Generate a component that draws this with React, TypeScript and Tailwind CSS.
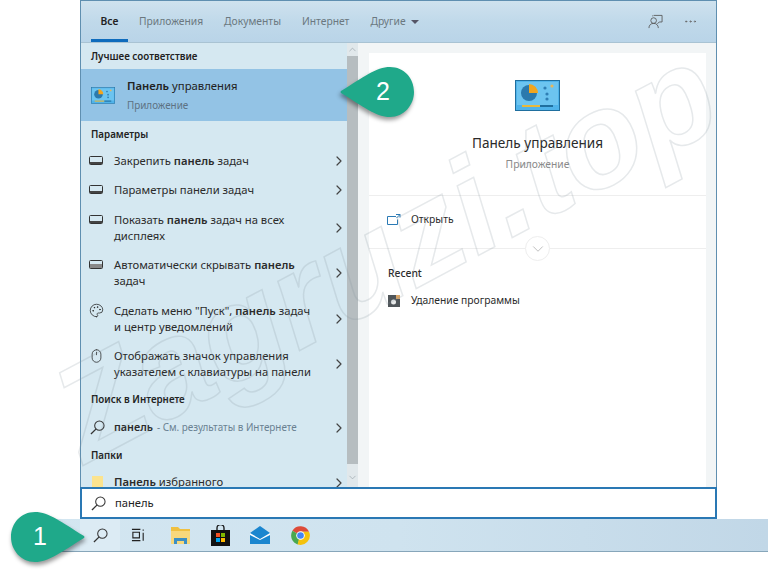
import { ChevronDown, ChevronRight, ChevronUp, MoreHorizontal, Mouse, Palette } from 'lucide-react'
import type { ReactNode } from 'react'

function ControlPanelIcon({ large }: { large?: boolean }) {
  return (
    <svg viewBox="0 0 45 31" className={large ? 'w-[45px] h-[31px]' : 'w-[24px] h-[17px]'}>
      <rect x="0.5" y="0.5" width="44" height="30" fill="#4fb3ea" stroke="#1f6f9f" />
      <rect x="2" y="2" width="41" height="23" fill="#6cc4f0" />
      <circle cx="14" cy="13" r="8" fill="#2b79ad" />
      <path d="M14 13V4a9 9 0 0 1 9 9z" fill="#f2a51e" />
      <circle cx="30" cy="8" r="1.6" fill="#2f7fb5" />
      <circle cx="37" cy="6" r="1.6" fill="#e7b65a" />
      <circle cx="32" cy="14" r="1.6" fill="#2f7fb5" />
      <circle cx="32" cy="19" r="1.6" fill="#2f7fb5" />
      <rect x="7" y="25" width="18" height="2" fill="#e8b93c" />
      <rect x="25" y="25" width="13" height="2" fill="#1f6f9f" />
    </svg>
  )
}

function TaskbarGlyph({ filled }: { filled?: boolean }) {
  return (
    <svg viewBox="0 0 14 9" className="w-[14px] h-[9px] shrink-0">
      <rect x="0.5" y="0.5" width="13" height="8" rx="1" fill="none" stroke="#333" />
      <rect x="1" y={filled ? 4 : 6} width="12" height={filled ? 4 : 2} fill={filled ? '#888' : '#444'} />
    </svg>
  )
}

function SearchGlyph({ className }: { className?: string }) {
  return (
    <svg viewBox="0 0 16 16" className={`w-[15px] h-[15px] shrink-0 ${className ?? ''}`} fill="none" stroke="#333" strokeWidth="1.1">
      <circle cx="10" cy="6" r="5" />
      <path d="M6.300 9.700 1 15" strokeWidth="1.400" />
    </svg>
  )
}

function SectionTitle({ children, className }: { children: ReactNode; className: string }) {
  return <div className={`pl-[10px] text-[9.8px] leading-[14px] font-semibold text-[#222] ${className}`}>{children}</div>
}

function SettingRow({ icon, children, className }: { icon: ReactNode; children: ReactNode; className: string }) {
  return (
    <div className={`flex items-center pl-[8px] ${className}`}>
      <div className="flex items-start">
        <div className="w-[25px] h-[16px] shrink-0 flex items-center">{icon}</div>
        <div className="w-[202px] shrink-0 text-[11.25px] leading-[16px] text-[#2b2b2b]">{children}</div>
      </div>
      <ChevronRight className="w-[16px] h-[16px] ml-auto text-[#444]" strokeWidth={1.8} />
    </div>
  )
}

function Tab({ children, active, className }: { children: ReactNode; active?: boolean; className?: string }) {
  return (
    <div className={`h-full flex items-center text-[10.3px] ${active ? 'w-[37px] justify-center font-semibold text-[#222] border-b-[3px] border-[#0f6cbd] pt-[3px]' : 'text-[#6b7880]'} ${className ?? ''}`}>
      {children}
    </div>
  )
}

function Callout({ n, flip, className, numClass }: { n: string; flip?: boolean; className: string; numClass: string }) {
  return (
    <div className={`absolute w-[74px] h-[50px] ${className}`}>
      <svg viewBox="0 0 74 50" className={`w-full h-full drop-shadow-[1px_3px_2px_rgba(0,0,0,0.4)] ${flip ? '-scale-x-100' : ''}`}>
        <path d="M24 0C38 0 50 10 73 24Q74 25 73 26C50 40 38 50 24 50C10 50 0 38 0 25C0 11 10 0 24 0Z" fill="#1fa98a" />
      </svg>
      <span className={`absolute top-0 h-full flex items-center text-[25px] text-white font-['Liberation_Sans',sans-serif] ${numClass}`}>{n}</span>
    </div>
  )
}

export default function App() {
  return (
    <div className="relative w-[768px] h-[574px] overflow-hidden bg-white font-['Noto_Sans',sans-serif]">
      {/* Search window */}
      <div className="ml-[80px] w-[637px] h-[519px] flex flex-col border-x border-t border-[#5f8fb0]">
        <div className="h-[42px] shrink-0 flex items-stretch pl-[10px] pr-[18px] bg-gradient-to-b from-[#cfe2ee] via-[#c0d9ea] to-[#b9d4e8] border-b border-[#a9c3d3]">
          <div className="flex items-stretch gap-[21px] text-nowrap">
            <Tab active>Все</Tab>
            <Tab className="-ml-[10px]">Приложения</Tab>
            <Tab>Документы</Tab>
            <Tab>Интернет</Tab>
            <div className="flex items-center gap-[5px] text-[10.3px] text-[#6b7880]">
              Другие
              <span className="w-0 h-0 border-x-[4px] border-x-transparent border-t-[4px] border-t-[#556]" />
            </div>
          </div>
          <div className="ml-auto flex items-center gap-[20px]">
            <svg viewBox="0 0 16 16" className="w-[15px] h-[15px]" fill="none" stroke="#555" strokeWidth="0.9">
              <circle cx="6" cy="7" r="3" />
              <path d="M1 15c0-3 2-5 5-5s5 2 5 5M6 1.500h9v7h-3l-2 2M5 1.500v1" />
            </svg>
            <MoreHorizontal className="w-[15px] h-[15px] text-[#666]" strokeWidth={1.3} />
          </div>
        </div>

        <div className="flex-1 min-h-0 flex">
          {/* Results list */}
          <div className="w-[266px] shrink-0 overflow-hidden bg-[#d5e8f1]">
            <SectionTitle className="pt-[7px] pb-[5px]">Лучшее соответствие</SectionTitle>
            <div className="h-[52px] flex items-center pl-[10px] bg-[#93c3e5]">
              <ControlPanelIcon />
              <div className="ml-[12px] text-[11.3px] leading-[16px] pt-[1px]">
                <div className="text-[#222]"><b className="font-semibold">Панель</b> управления</div>
                <div className="text-[9.9px] text-[#5d7283] mt-[3px]">Приложение</div>
              </div>
            </div>
            <SectionTitle className="pt-[7px] pb-[5px]">Параметры</SectionTitle>
            <SettingRow icon={<TaskbarGlyph />} className="h-[27px]"><span>Закрепить <b className="font-semibold">панель</b> задач</span></SettingRow>
            <SettingRow icon={<TaskbarGlyph />} className="h-[29px] mt-[1px]">Параметры панели задач</SettingRow>
            <SettingRow icon={<TaskbarGlyph />} className="h-[45px] mt-[1px]"><span>Показать <b className="font-semibold">панель</b> задач на всех дисплеях</span></SettingRow>
            <SettingRow icon={<TaskbarGlyph filled />} className="h-[45px]"><span>Автоматически скрывать <b className="font-semibold">панель</b> задач</span></SettingRow>
            <SettingRow icon={<Palette className="w-[15px] h-[15px] text-[#222]" strokeWidth={1.2} />} className="h-[45px] mt-[1px]"><span>Сделать меню "Пуск", <b className="font-semibold">панель</b> задач и центр уведомлений</span></SettingRow>
            <SettingRow icon={<Mouse className="w-[15px] h-[16px] text-[#222]" strokeWidth={1.2} />} className="h-[45px]">Отображать значок управления указателем с клавиатуры на панели</SettingRow>
            <SectionTitle className="pt-[7px] pb-[6px]">Поиск в Интернете</SectionTitle>
            <div className="h-[27px] flex items-center pl-[9px] mt-[1px]">
              <SearchGlyph className="mr-[9px]" />
              <span className="text-[10.8px] text-[#2b2b2b] font-semibold">панель</span>
              <span className="text-[9.9px] text-[#6a8191] ml-[4px]">- См. результаты в Интернете</span>
              <ChevronRight className="w-[16px] h-[16px] ml-auto text-[#444]" strokeWidth={1.8} />
            </div>
            <SectionTitle className="pt-[8px] pb-[6px]">Папки</SectionTitle>
            <div className="h-[27px] flex items-center pl-[11px]">
              <span className="w-[11px] h-[14px] bg-[#fbe38e] mr-[11px]" />
              <span className="text-[11.25px] text-[#2b2b2b]"><b className="font-semibold">Панель</b> избранного</span>
              <ChevronRight className="w-[16px] h-[16px] ml-auto text-[#444]" strokeWidth={1.8} />
            </div>
          </div>

          {/* Scrollbar */}
          <div className="w-[11px] shrink-0 flex flex-col bg-[#e1e8eb]">
            <ChevronUp className="w-[11px] h-[13px] text-[#9aa5ab]" strokeWidth={1.5} />
            <div className="h-[408px] bg-[#b6bdc0]" />
            <ChevronDown className="w-[11px] h-[13px] mt-auto mb-[3px] text-[#9aa5ab]" strokeWidth={1.5} />
          </div>

          {/* Details */}
          <div className="flex-1 bg-[#f2f5f6] pt-[10px] pl-[11px] pr-[10px]">
            <div className="h-full bg-white">
              <div className="h-[143px] flex flex-col items-center border-b border-[#eeeeee]">
                <div className="mt-[27px] flex"><ControlPanelIcon large /></div>
                <div className="mt-[22px] text-[13.6px] leading-[20px] text-[#2a2a2a]">Панель управления</div>
                <div className="mt-[3px] text-[10.3px] leading-[16px] text-[#8a8a8a]">Приложение</div>
              </div>
              <div className="relative h-[53px] flex items-center pl-[18px] pb-[4px] border-b border-[#eeeeee]">
                <svg viewBox="0 0 14 12" className="w-[14px] h-[12px] mr-[10px]" fill="none" stroke="#2a7ab5" strokeWidth="1">
                  <path d="M9 2.500H.5v8h10v-5M9 .500h4v3M13 .500 9.500 4" />
                </svg>
                <span className="text-[10.3px] text-[#2b2b2b]">Открыть</span>
                <div className="absolute left-[156px] bottom-[-13px] w-[25px] h-[25px] rounded-full bg-white border border-[#eeeeee] flex items-center justify-center">
                  <ChevronDown className="w-[18px] h-[18px] text-[#aaa]" strokeWidth={1} />
                </div>
              </div>
              <div className="pl-[19px] pt-[17px] text-[10.3px] leading-[14px] font-medium text-[#2b2b2b]">Recent</div>
              <div className="flex items-center pl-[19px] mt-[13px]">
                <svg viewBox="0 0 12 12" className="w-[12px] h-[12px] mr-[11px]">
                  <rect width="12" height="12" fill="#50565a" />
                  <rect x="8" width="4" height="4" fill="#d9a66a" />
                  <circle cx="5.500" cy="7" r="2.500" fill="#e8eaea" />
                </svg>
                <span className="text-[10.3px] text-[#2b2b2b]">Удаление программы</span>
              </div>
            </div>
          </div>
        </div>

        {/* Search box */}
        <div className="h-[32px] shrink-0 flex items-center -mx-px pl-[9px] bg-white border-2 border-[#2a78b4]">
          <SearchGlyph className="mr-[9px]" />
          <span className="text-[11.2px] text-[#222]">панель</span>
        </div>
      </div>

      {/* Taskbar */}
      <div className="ml-[30px] h-[33px] flex items-center pl-[50px] bg-gradient-to-r from-[#d3e6f1] via-[#cfe3ef] to-[#c1d7e7] border-b border-[#87a6ba]">
        <div className="w-[40px] h-full flex items-center justify-center bg-[#dcebf4]">
          <SearchGlyph />
        </div>
        <svg viewBox="0 0 16 14" className="w-[15px] h-[14px] ml-[11px]" fill="none" stroke="#222" strokeWidth="1.2">
          <path d="M1 1h9M1 13h9M2 4h7v6H2zM13 1v1.500M13 4.500V13" />
        </svg>
        <svg viewBox="0 0 20 17" className="w-[20px] h-[17px] ml-[25px]">
          <path d="M0 0h7l2 2h10v3H0z" fill="#f0c040" />
          <rect y="4" width="19" height="13" fill="#f7d87c" />
          <path d="M3 17v-6h13v6h-3v-3H6v3z" fill="#3b8fc4" />
        </svg>
        <svg viewBox="0 0 19 21" className="w-[19px] h-[21px] ml-[20px]">
          <path d="M6 6V3a3.500 3.500 0 0 1 7 0v3" fill="none" stroke="#111" strokeWidth="1.3" />
          <rect y="5" width="19" height="16" fill="#111" />
          <rect x="5" y="8" width="4" height="4" fill="#f25022" />
          <rect x="10" y="8" width="4" height="4" fill="#7fba00" />
          <rect x="5" y="13" width="4" height="4" fill="#00a4ef" />
          <rect x="10" y="13" width="4" height="4" fill="#ffb900" />
        </svg>
        <svg viewBox="0 0 20 18" className="w-[20px] h-[18px] ml-[20px]">
          <path d="M0 7 10 0l10 7v11H0z" fill="#1b86cf" />
          <path d="M0 7l10 6 10-6v2l-10 5L0 9z" fill="#fff" />
        </svg>
        <svg viewBox="0 0 20 20" className="w-[19px] h-[19px] ml-[21px]">
          <path d="M10 10 1.500 5A10 10 0 0 1 19 6h-9z" fill="#dd4b39" />
          <path d="M10 10 1.500 5A10 10 0 0 0 7 19.500z" fill="#4aa84f" />
          <path d="M10 6h9a10 10 0 0 1-12 13.500z" fill="#f4c20d" />
          <circle cx="10" cy="10" r="4.500" fill="#fff" />
          <circle cx="10" cy="10" r="3.500" fill="#4285f4" />
        </svg>
      </div>

      {/* Watermark */}
      <div className="absolute left-[-30px] top-[185px] w-[830px] text-center -rotate-[28deg] pointer-events-none text-[135px] leading-none font-bold italic text-transparent font-['Liberation_Sans',sans-serif] [-webkit-text-stroke:1.5px_rgba(130,145,155,0.2)]">
        Zagruzi.top
      </div>

      <Callout n="2" flip className="left-[340px] top-[67px]" numClass="left-[36px]" />
      <Callout n="1" className="left-[11px] top-[512px]" numClass="left-[22px]" />
    </div>
  )
}
